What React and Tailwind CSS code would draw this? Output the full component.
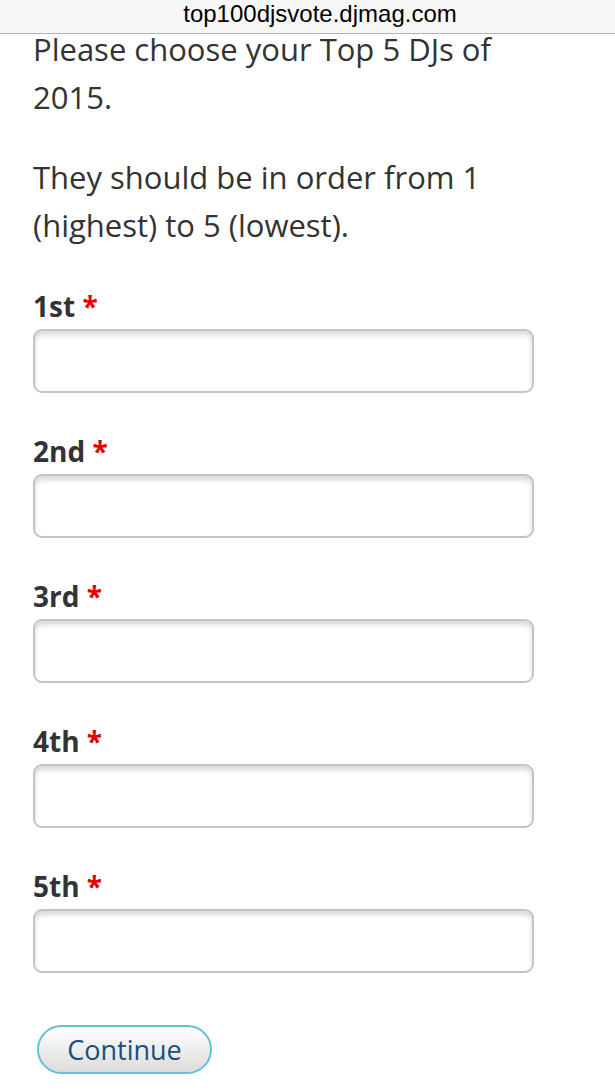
import React from "react";

const places = ["1st", "2nd", "3rd", "4th", "5th"];

const Field = ({ label }) => {
  return (
    <div className="flex flex-col gap-[2px] mb-[37px]">
      <label className="text-[#333333] text-[28px] leading-[42px] font-bold">
        {label} <span className="text-[#e60000]">*</span>
      </label>
      <input
        type="text"
        className="h-[64px] w-full border-2 border-[#c4c4c4] rounded-[9px] bg-white shadow-[inset_0_4px_5px_rgba(0,0,0,0.15)] outline-none px-3"
      />
    </div>
  );
};

export default function App() {
  return (
    <div className="min-h-[1090px] bg-white font-['Open_Sans',sans-serif] overflow-hidden">
      <div className="relative z-10 h-[34px] bg-[#f7f7f7] border-b border-[#b3b3b3] flex items-center justify-center pl-[25px]">
        <span className="font-['Liberation_Sans',Arial,sans-serif] text-[24px] leading-none text-black pb-[5px]">
          top100djsvote.djmag.com
        </span>
      </div>
      <div className="w-[501px] ml-[33px] -mt-[9px]">
        <p className="text-[#333333] text-[31px] leading-[48px] mb-8">
          Please choose your Top 5 DJs of 2015.
        </p>
        <p className="text-[#333333] text-[31px] leading-[48px] mb-[36px]">
          They should be in order from 1 (highest) to 5 (lowest).
        </p>
        <form className="flex flex-col">
          {places.map((p) => (
            <Field key={p} label={p} />
          ))}
          <div className="pt-[15px]">
            <button
              type="button"
              className="ml-[4px] w-[175px] h-[49px] rounded-full border-2 border-[#62c1da] bg-gradient-to-b from-white to-[#dcdcdc] text-[#1b4f7c] text-[27px] leading-none"
            >
              Continue
            </button>
          </div>
        </form>
      </div>
    </div>
  );
}
